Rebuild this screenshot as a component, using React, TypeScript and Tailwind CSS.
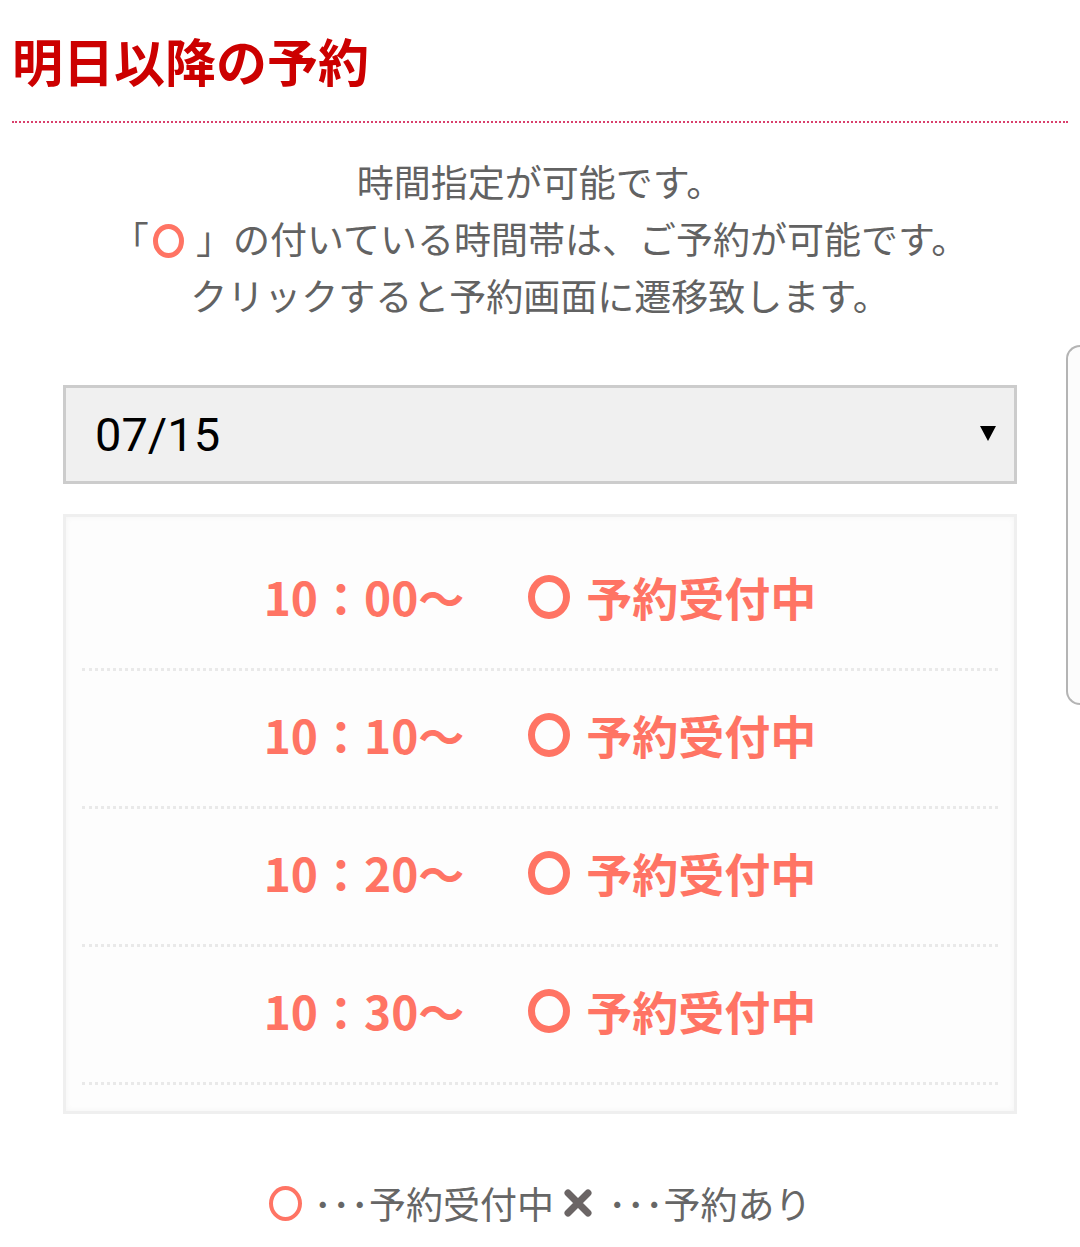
const slots = ['10：00〜', '10：10〜', '10：20〜', '10：30〜'];

function Ring({ className }: { className: string }) {
  return <span className={`inline-block rounded-[50%] border-[#ff7464] ${className}`} />;
}

export default function App() {
  return (
    <div
      className="relative min-h-[1247px] bg-white"
      style={{ fontFamily: '"Noto Sans CJK JP", "Noto Sans", Roboto, sans-serif' }}
    >
      {/* side tab peeking in from the right edge */}
      <div className="absolute right-0 top-[345px] h-[360px] w-[14px] rounded-l-[16px] border-2 border-r-0 border-[#b4b4b4] bg-[#fcfcfc]" />

      <div className="px-3 pt-[29px]">
        <h1 className="pb-[30px] text-[51px] font-bold leading-[62px] text-[#cc0000]">明日以降の予約</h1>
        <div className="border-t-2 border-dotted border-[#d9406c]" />
      </div>

      <div className="pt-[30px] text-center text-[37px] leading-[57px] text-[#626262]">
        <p>時間指定が可能です。</p>
        <p>
          「<Ring className="mx-[4px] h-[34px] w-[31px] border-[5px] align-[-4px]" /> 」の付いている時間帯は、ご予約が可能です。
        </p>
        <p>クリックすると予約画面に遷移致します。</p>
      </div>

      <div className="px-[63px] pt-[61px]">
        <div className="flex h-[99px] items-center justify-between border-[3px] border-[#cccccc] bg-[#f0f0f0] pl-[29px] pr-[18px]">
          <span className="text-[47px] leading-none text-black" style={{ fontFamily: 'Roboto, "Noto Sans", sans-serif' }}>
            07/15
          </span>
          <svg width="16" height="16" viewBox="0 0 16 16" className="mt-[-4px]">
            <path d="M0 1h16L8 16z" fill="#000" />
          </svg>
        </div>

        <div className="mt-[30px] border-[3px] border-[#efefef] bg-[#fdfdfd] px-4 pb-[26px] pt-[16px] shadow-[inset_0_0_6px_rgba(0,0,0,0.04)]">
          {slots.map((t) => (
            <div
              key={t}
              className="flex h-[138px] items-center justify-center gap-[64px] border-b-[3px] border-dotted border-[#e9e9e9] pb-[8px] text-[46px] font-bold text-[#ff7464]"
            >
              <span>{t}</span>
              <span className="flex items-center gap-[16px]">
                <Ring className="h-[44px] w-[42px] border-[7px]" />
                <span>予約受付中</span>
              </span>
            </div>
          ))}
        </div>
      </div>

      <div className="flex items-center justify-center pt-[64px] text-[37px] leading-[50px] text-[#666666]">
        <Ring className="h-[35px] w-[33px] border-[4px]" />
        <span className="ml-[12px]">･･･予約受付中</span>
        <svg width="28" height="28" viewBox="0 0 28 28" className="ml-[10px] mr-[16px]">
          <path d="M4 4L24 24M24 4L4 24" stroke="#6b6565" strokeWidth="7" strokeLinecap="round" />
        </svg>
        <span>･･･予約あり</span>
      </div>
    </div>
  );
}
